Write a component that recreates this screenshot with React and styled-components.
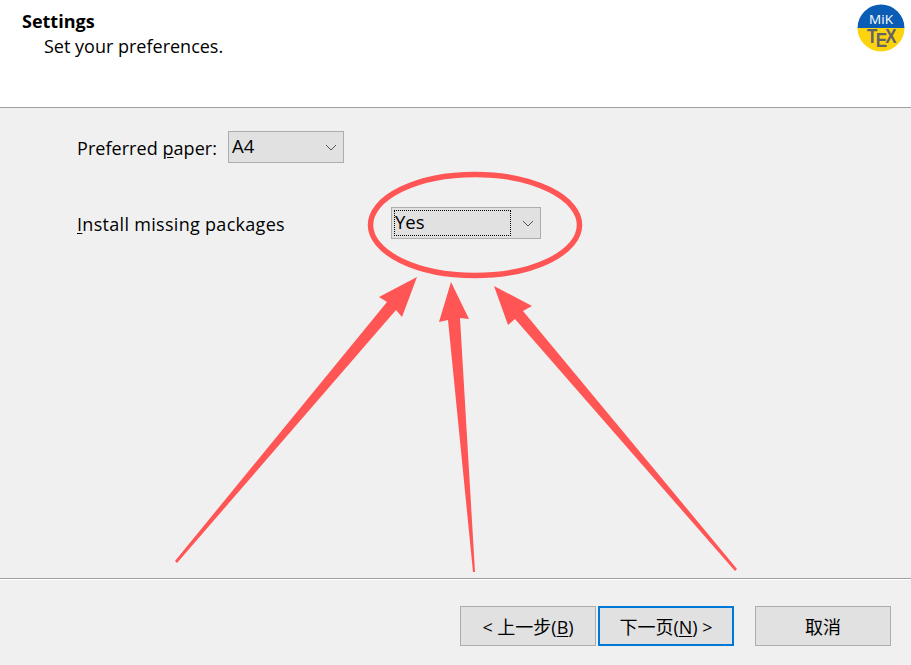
import React from 'react';
import styled, { createGlobalStyle } from 'styled-components';

const GlobalStyle = createGlobalStyle`
  html, body { margin: 0; padding: 0; background: #f0f0f0; }
  body { font-family: "Open Sans", "Noto Sans CJK SC", sans-serif; color: #000; }
`;

const Wizard = styled.div`
  position: relative;
  width: 911px;
  height: 665px;
  overflow: hidden;
  display: flex;
  flex-direction: column;
  background: #f0f0f0;
`;

const Header = styled.header`
  height: 108px;
  flex: none;
  box-sizing: border-box;
  background: #fff;
  border-bottom: 1px solid #a0a0a0;
  padding: 9px 6px 0 22px;
  display: flex;
  justify-content: space-between;
  align-items: flex-start;
`;

const Title = styled.div`
  font-size: 18px;
  font-weight: 700;
  line-height: 25px;
`;

const Subtitle = styled.div`
  font-size: 18px;
  line-height: 25px;
  margin-left: 22px;
`;

const Logo = styled.svg`
  width: 48px;
  height: 48px;
  margin-top: -5px;
`;

const Body = styled.main`
  flex: 1;
  padding: 23px 0 0 77px;
  display: flex;
  flex-direction: column;
  gap: 44px;
`;

const Row = styled.div`
  display: flex;
  align-items: center;
`;

const Label = styled.label`
  font-size: 18px;
  letter-spacing: ${(p) => p.$spacing || 0}px;
  width: ${(p) => p.$width}px;
  flex: none;
  padding-top: 2px;
  u { text-underline-offset: 2px; }
`;

const Select = styled.div`
  box-sizing: border-box;
  width: ${(p) => p.$width}px;
  height: 32px;
  background: #e1e1e1;
  border: 1px solid #adadad;
  display: flex;
  align-items: center;
  justify-content: space-between;
  padding: 2px;
  font-size: 18.5px;
`;

const SelectValue = styled.div`
  flex: 1;
  height: 100%;
  box-sizing: border-box;
  line-height: 21px;
  border: ${(p) => (p.$focused ? '1px dotted #000' : '1px solid transparent')};
`;

const Chevron = styled.svg`
  width: 12px;
  height: 7px;
  margin: 0 4px 0 11px;
  flex: none;
`;

const Footer = styled.footer`
  height: 87px;
  flex: none;
  box-sizing: border-box;
  border-top: 1px solid #a0a0a0;
  box-shadow: inset 0 1px 0 #fff;
  padding: 27px 20px 0 0;
  display: flex;
  justify-content: flex-end;
`;

const Button = styled.button`
  box-sizing: border-box;
  width: 136px;
  height: 40px;
  padding: 0;
  margin-left: ${(p) => p.$gap}px;
  background: #e1e1e1;
  border: ${(p) => (p.$primary ? '2px solid #0078d7' : '1px solid #adadad')};
  font-family: "Open Sans", "Noto Sans CJK SC", sans-serif;
  font-size: 18px;
  color: #000;
  white-space: nowrap;
  u { text-underline-offset: 2px; }
`;

const Annotation = styled.svg`
  position: absolute;
  inset: 0;
  width: 911px;
  height: 665px;
  pointer-events: none;
`;

const MikTexLogo = () => (
  <Logo viewBox="0 0 48 48">
    <defs>
      <clipPath id="disc"><circle cx="24" cy="24" r="23.5" /></clipPath>
    </defs>
    <g clipPath="url(#disc)">
      <rect width="48" height="24" fill="#0b5cb4" />
      <rect y="24" width="48" height="24" fill="#fbd40f" />
    </g>
    <text x="24" y="20" textAnchor="middle" fontFamily="Open Sans" fontSize="13.5" fill="#fff">MiK</text>
    <text transform="translate(10 39) scale(.85 1)" fontFamily="Liberation Sans" fontWeight="700" fontSize="20" fill="#636363">
      T<tspan dx="-2" dy="4">E</tspan><tspan dx="-2" dy="-4">X</tspan>
    </text>
  </Logo>
);

const Arrows = () => (
  <Annotation viewBox="0 0 911 665">
    <ellipse cx="475" cy="225" rx="104.5" ry="50.5" fill="none" stroke="#ff5555" strokeWidth="5.5" />
    <polygon points="175,561 387,302 379,297 417,277 402,317 396,310 177,563" fill="#ff5555" />
    <polygon points="473,572 448,320 439,322 451,282 469,319 460,318 475,572" fill="#ff5555" />
    <polygon points="737,569 523,311 532,306 494,286 508,325 515,319 735,571" fill="#ff5555" />
  </Annotation>
);

export default function App() {
  return (
    <Wizard>
      <GlobalStyle />
      <Header>
        <div>
          <Title>Settings</Title>
          <Subtitle>Set your preferences.</Subtitle>
        </div>
        <MikTexLogo />
      </Header>
      <Body>
        <Row>
          <Label $width={151} $spacing={0.05}>Preferred <u>p</u>aper:</Label>
          <Select $width={116}>
            <SelectValue>A4</SelectValue>
            <Chevron viewBox="0 0 12 7"><path d="M1 1l5 5 5-5" fill="none" stroke="#555" /></Chevron>
          </Select>
        </Row>
        <Row>
          <Label $width={314} $spacing={0.3}><u>I</u>nstall missing packages</Label>
          <Select $width={150}>
            <SelectValue $focused>Yes</SelectValue>
            <Chevron viewBox="0 0 12 7"><path d="M1 1l5 5 5-5" fill="none" stroke="#555" /></Chevron>
          </Select>
        </Row>
      </Body>
      <Footer>
        <Button>&lt; 上一步(<u>B</u>)</Button>
        <Button $primary $gap={2}>下一页(<u>N</u>) &gt;</Button>
        <Button $gap={21}>取消</Button>
      </Footer>
      <Arrows />
    </Wizard>
  );
}
